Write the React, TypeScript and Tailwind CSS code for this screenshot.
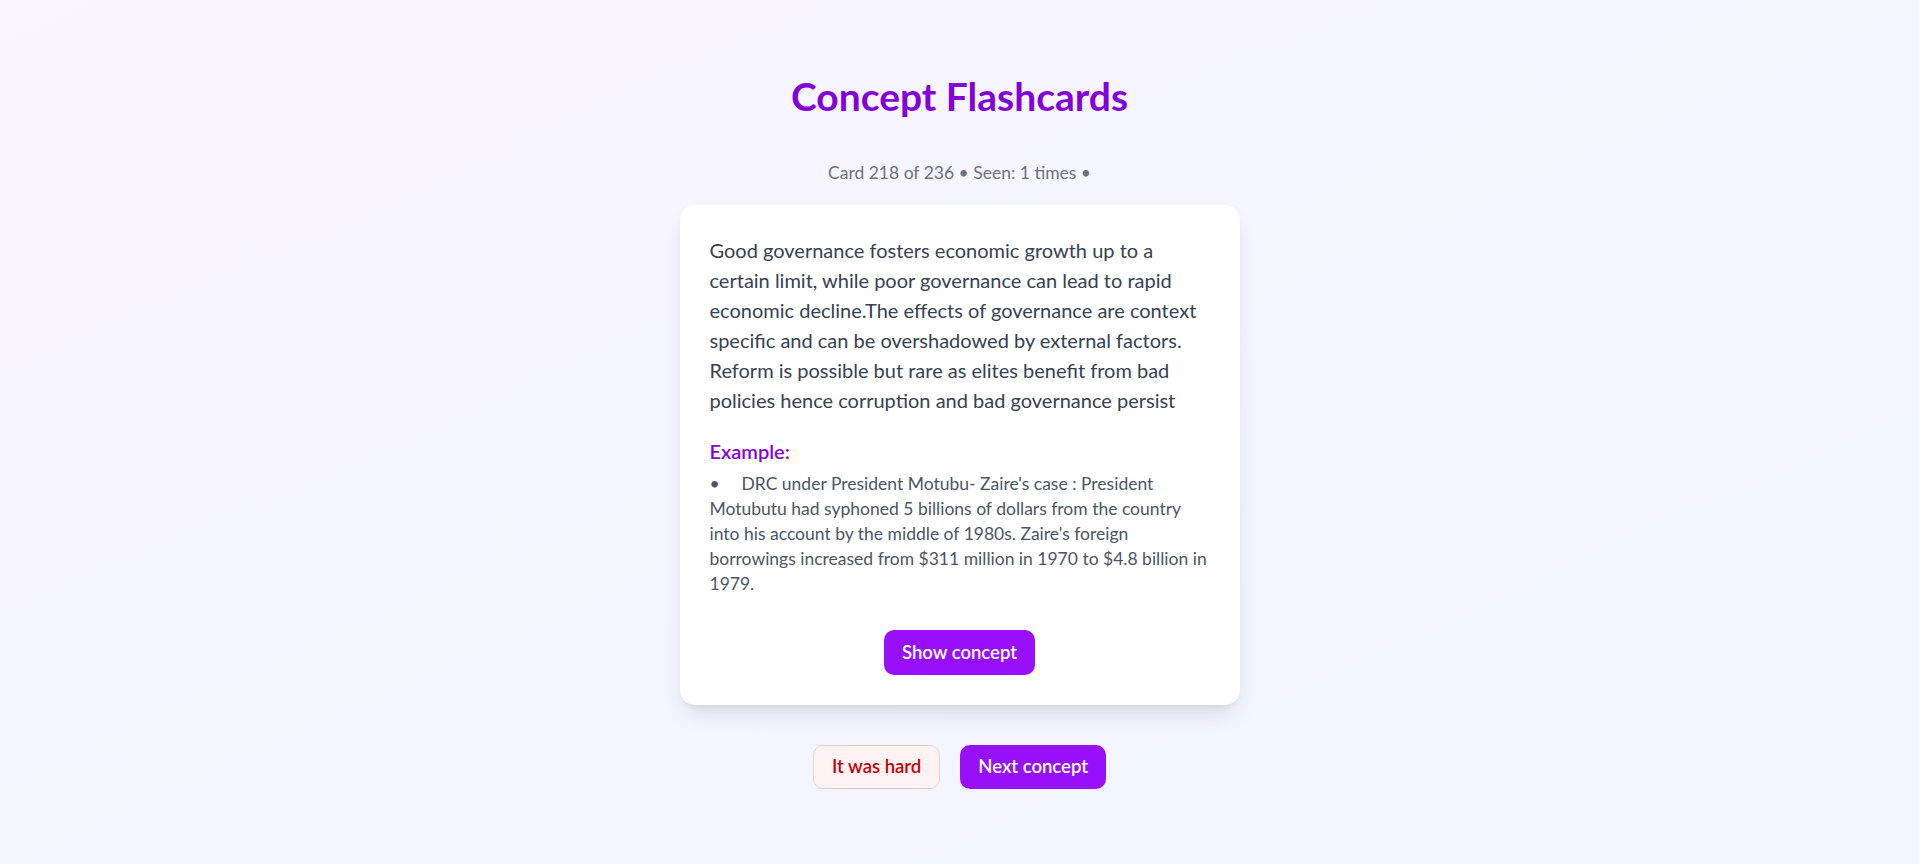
import { useState } from 'react';

const card = {
  explanation:
    'Good governance fosters economic growth up to a certain limit, while poor governance can lead to rapid economic decline.The effects of governance are context specific and can be overshadowed by external factors. Reform is possible but rare as elites benefit from bad policies hence corruption and bad governance persist',
  examples: [
    "DRC under President Motubu- Zaire's case : President Motubutu had syphoned 5 billions of dollars from the country into his account by the middle of 1980s. Zaire's foreign borrowings increased from $311 million in 1970 to $4.8 billion in 1979.",
  ],
};

export default function App() {
  const [showConcept, setShowConcept] = useState(false);

  return (
    <div className="min-h-screen bg-linear-to-br from-purple-50 to-blue-50 flex flex-col items-center pt-[74px] pb-10 font-['Lato','Noto_Sans',sans-serif]">
      <h1 className="text-[39px] leading-[45px] font-bold text-purple-700 mb-[41px]">Concept Flashcards</h1>

      <p className="text-[17.5px] leading-[25px] text-gray-500 mb-[20px]">Card 218 of 236 • Seen: 1 times •</p>

      {/* Card */}
      <div className="w-[560px] bg-white rounded-[15px] p-[30px] shadow-[0_12px_22px_-4px_rgba(0,0,0,0.1),0_5px_9px_-5px_rgba(0,0,0,0.1)]">
        <p className="text-[20px] leading-[30px] text-gray-700 mb-[21px]">{card.explanation}</p>

        <h3 className="text-[20px] leading-[30px] font-semibold text-purple-700 mb-[5px]">Example:</h3>
        <ul className="text-[17.5px] leading-[25px] text-gray-600">
          {card.examples.map((ex, i) => (
            <li key={i}>{'•\u2003\u2002' + ex}</li>
          ))}
        </ul>

        <div className="flex justify-center mt-[34px]">
          <button
            onClick={() => setShowConcept(!showConcept)}
            className="h-[45px] px-[18px] rounded-[10px] bg-purple-600 text-white text-[18.5px] font-semibold"
          >
            Show concept
          </button>
        </div>
      </div>

      {/* Actions */}
      <div className="flex gap-[20px] mt-[40px]">
        <button className="h-[44px] px-[18px] rounded-[10px] bg-red-50 border border-red-200 text-red-700 text-[18.5px] font-semibold">
          It was hard
        </button>
        <button className="h-[44px] px-[18px] rounded-[10px] bg-purple-600 text-white text-[18.5px] font-semibold">
          Next concept
        </button>
      </div>
    </div>
  );
}
